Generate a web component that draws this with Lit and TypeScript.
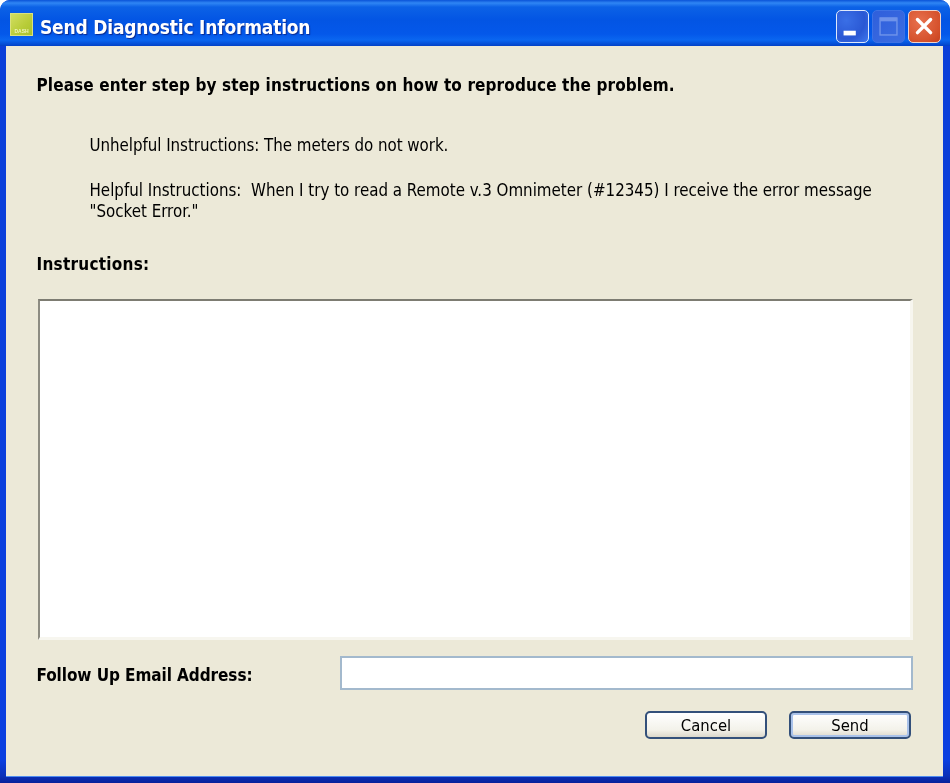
import { LitElement, html, css } from "lit";
import { customElement } from "lit/decorators.js";

@customElement("app-root")
export class AppRoot extends LitElement {
  static styles = css`
    :host { display: block; width: 950px; height: 783px; background: #fff; font-family: "DejaVu Sans Condensed", "DejaVu Sans", sans-serif; color: #000; overflow: hidden; }
    .window { box-sizing: border-box; width: 950px; height: 783px; display: flex; flex-direction: column; background: linear-gradient(to bottom, #0a3fd8 0, #0a3fe0 760px, #0a30b8 776px, #08209a 783px); border-radius: 10px 10px 0 0; filter: blur(0.35px); }
    .titlebar { box-sizing: border-box; height: 46px; flex: none; display: flex; align-items: center; padding: 6px 9px 0 10px;
      background: linear-gradient(to bottom, #0a53d8 0, #2f86f4 3px, #0c62e6 7px, #0355e4 20px, #0458ea 34px, #0a66f0 40px, #0348cf 45px, #0340c4 46px); border-radius: 10px 10px 0 0; }
    .logo { width: 23px; height: 23px; flex: none; margin-top: -3px; background: linear-gradient(135deg, #d2de62, #b8cc38 60%, #a9c12e); border: 1px solid #d9e27f; box-sizing: border-box; display: flex; align-items: flex-end; justify-content: center; }
    .logo span { font: bold 5px "Liberation Sans", sans-serif; color: #eef3b8; line-height: 7px; }
    .title { margin: 2px 0 0 7px; font-size: 19px; font-weight: bold; color: #fff; letter-spacing: -0.2px; text-shadow: 1px 1px 1px #0a2a90; flex: 1; }
    .ctl { width: 33px; height: 33px; box-sizing: border-box; border: 1.5px solid #dfe9fb; border-radius: 5px; margin-left: 3px; flex: none; display: block; background: radial-gradient(circle at 30% 30%, #3a6fe6, #2a58d4 60%, #3f78ee); }
    .ctl.dis { border-color: #3e72e4; background: linear-gradient(135deg, #2f5fdb, #3c6de2); }
    .ctl.close { border-color: #efd5cc; background: radial-gradient(circle at 35% 35%, #e8714e, #d5512c 70%, #c6411f); }
    .client { flex: 1; min-height: 0; margin: 0 7px 7px 6px; background: #ece9d8; padding: 30px 31px 0; display: flex; flex-direction: column; box-shadow: 0 1px 0 #4f8cf0; }
    h1 { margin: 0 0 0 -0.5px; font-size: 17px; line-height: 18px; font-weight: bold; letter-spacing: 0.115px; }
    .examples { margin: 41px 0 0 52.5px; font-size: 16.78px; line-height: 21px; }
    .examples p { margin: 0 0 25px; }
    .examples p:first-child { margin-bottom: 24px; letter-spacing: -0.04px; }
    .label { font-size: 17px; font-weight: bold; line-height: 20px; margin-left: -0.5px; }
    .instr { margin-top: 7px; letter-spacing: 0.25px; }
    .follow { margin-top: 4px; letter-spacing: -0.08px; }
    .area { box-sizing: border-box; flex: none; height: 341px; width: 875px; margin: 25px 0 0 1px; background: #fff; border: 3px solid; border-color: #7d7c72 #f7f6ef #f7f6ef #8d8c82; border-top-width: 2px; border-left-width: 2px; }
    .row { display: flex; align-items: center; justify-content: space-between; width: 876px; margin-top: 16px; }
    .email { box-sizing: border-box; width: 573px; height: 34px; background: #fff; border: 2px solid #a3b9cd; }
    .buttons { display: flex; justify-content: flex-end; gap: 22px; width: 874px; margin-top: 21px; }
    .btn { box-sizing: border-box; width: 122px; height: 28px; border: 2px solid #33507a; border-radius: 5px; font-size: 16.5px; display: flex; align-items: center; justify-content: center; background: linear-gradient(to bottom, #fff, #f3f2ea 70%, #dcd8cb); }
    .btn.def { box-shadow: inset 0 0 0 2px #a9c2ea; }
  `;

  render() {
    return html`
      <div class="window">
        <div class="titlebar">
          <div class="logo"><span>DASH</span></div>
          <div class="title">Send Diagnostic Information</div>
          <svg class="ctl" viewBox="0 0 33 33"><rect x="7" y="21" width="13" height="5" fill="#fff"/></svg>
          <svg class="ctl dis" viewBox="0 0 33 33"><rect x="7.5" y="7.5" width="18" height="18" fill="none" stroke="#6f93ea" stroke-width="1.5"/><rect x="7.5" y="7" width="18" height="4" fill="#6f93ea"/></svg>
          <svg class="ctl close" viewBox="0 0 33 33"><path d="M9 9L23 23M23 9L9 23" stroke="#fff" stroke-width="3.6" stroke-linecap="round"/></svg>
        </div>
        <div class="client">
          <h1>Please enter step by step instructions on how to reproduce the problem.</h1>
          <div class="examples">
            <p>Unhelpful Instructions: The meters do not work.</p>
            <p>Helpful Instructions:&nbsp; When I try to read a Remote v.3 Omnimeter (#12345) I receive the error message<br>"Socket Error."</p>
          </div>
          <div class="label instr">Instructions:</div>
          <div class="area"></div>
          <div class="row">
            <div class="label follow">Follow Up Email Address:</div>
            <div class="email"></div>
          </div>
          <div class="buttons">
            <div class="btn">Cancel</div>
            <div class="btn def">Send</div>
          </div>
        </div>
      </div>
    `;
  }
}
